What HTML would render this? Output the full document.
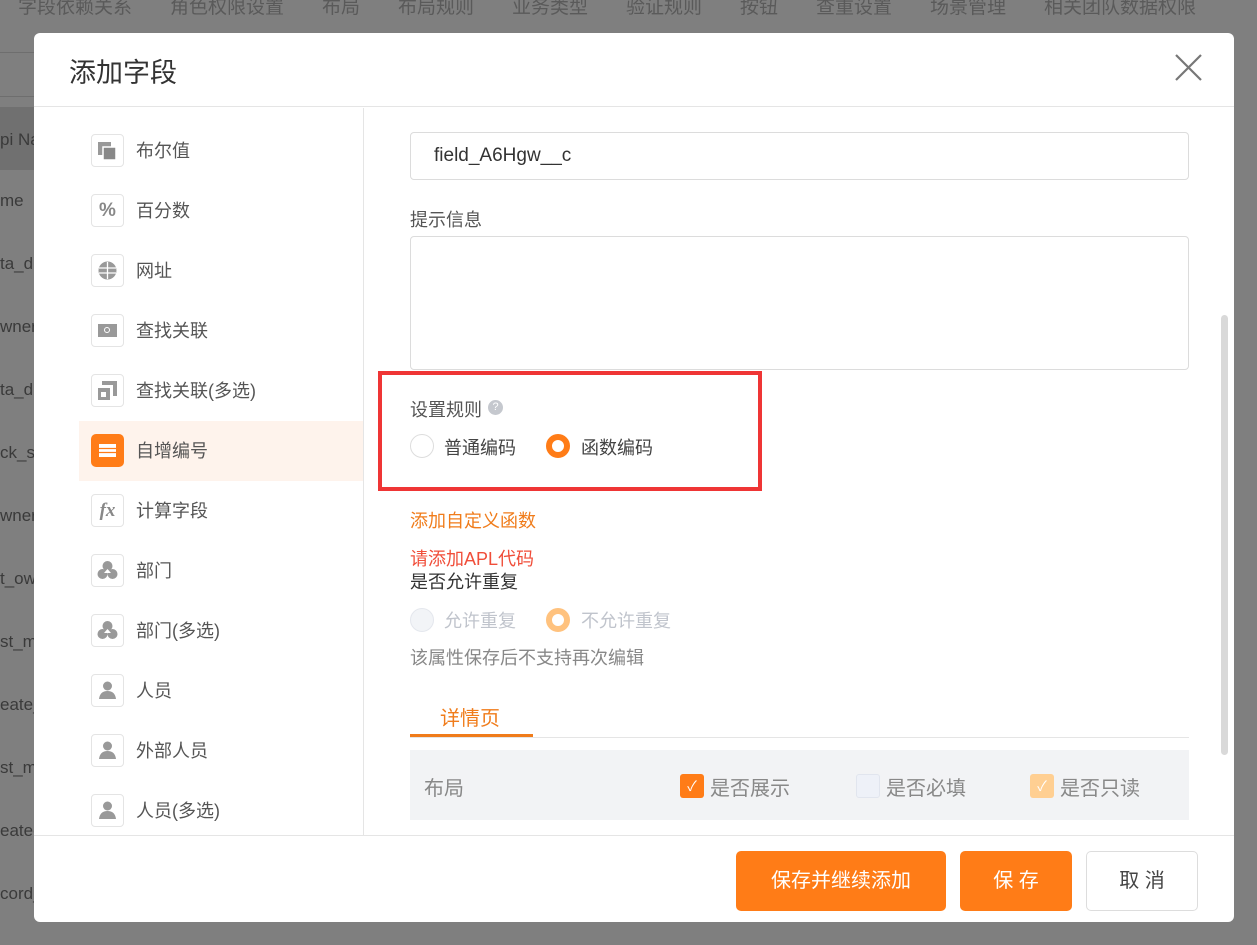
<!DOCTYPE html>
<html><head><meta charset="utf-8"><style>
*{margin:0;padding:0;box-sizing:border-box}
body{width:1257px;height:945px;overflow:hidden;background:#7f7f7f;font-family:"Liberation Sans","Noto Sans CJK SC",sans-serif;position:relative;color:#333}
.bgt{position:absolute;top:-8px;font-size:19px;color:#5a5a5a;white-space:nowrap}
.bgr{position:absolute;left:0;font-size:17px;color:#3a3a3a}
.bgl{position:absolute;left:0;width:40px;height:1px;background:#6e6e6e}
.modal{position:absolute;left:34px;top:33px;width:1200px;height:889px;background:#fff;border-radius:6px;overflow:hidden}
.hd{position:absolute;left:0;top:0;width:100%;height:74px;border-bottom:1px solid #e5e5e5}
.hd h1{position:absolute;left:35px;top:18px;font-size:27px;font-weight:normal;color:#333}
.left{position:absolute;left:0;top:75px;width:330px;height:727px;border-right:1px solid #e5e5e5;overflow:hidden}
.it{position:absolute;left:45px;width:285px;height:60px}
.it.on{background:#fef3ec}
.ic{position:absolute;left:12px;top:13px;width:33px;height:33px;border:1px solid #e4e4e4;border-radius:4px;background:#fff}
.it.on .ic{background:#ff7c17;border-color:#ff7c17;border-radius:5px}
.it span{position:absolute;left:57px;top:16px;font-size:18px;color:#555}
.right{position:absolute;left:376px;top:75px}
.inp{position:absolute;left:0;width:779px;border:1px solid #dcdcdc;border-radius:4px}
.lbl{position:absolute;font-size:18px;white-space:nowrap}
.rad{position:absolute;width:24px;height:24px;border-radius:50%}
.ft{position:absolute;left:0;top:802px;width:100%;height:1px;background:#e5e5e5}
.btn{position:absolute;top:818px;height:60px;border-radius:5px;font-size:20px;text-align:center;line-height:60px}
.cb{position:absolute;width:24px;height:24px;border-radius:3px;top:741px}
</style></head><body>
<div class="bgt" style="left:18px">字段依赖关系　　角色权限设置　　布局　　布局规则　　业务类型　　验证规则　　按钮　　查重设置　　场景管理　　相关团队数据权限</div>
<div class="bgl" style="top:52px"></div><div class="bgl" style="top:96px"></div>
<div style="position:absolute;left:0;top:107px;width:40px;height:63px;background:#707070"></div>
<div class="bgr" style="top:130px">pi Na</div><div class="bgr" style="top:191px">me</div><div class="bgr" style="top:254px">ta_d</div><div class="bgr" style="top:317px">wner</div><div class="bgr" style="top:380px">ta_d</div><div class="bgr" style="top:443px">ck_st</div><div class="bgr" style="top:506px">wner_</div><div class="bgr" style="top:569px">t_ow</div><div class="bgr" style="top:632px">st_m</div><div class="bgr" style="top:695px">eate_</div><div class="bgr" style="top:758px">st_m</div><div class="bgr" style="top:821px">eated</div><div class="bgr" style="top:884px">cord_</div>
<div class="modal">
<div class="hd"><h1>添加字段</h1>
<svg style="position:absolute;left:1141px;top:21px" width="27" height="27" viewBox="0 0 27 27"><path d="M1 1L26 26M26 1L1 26" stroke="#777" stroke-width="2.2"/></svg></div>
<div class="left">
<div class="it" style="top:13px"><div class="ic"><svg width="31" height="31"><rect x="6" y="7" width="13" height="13" fill="#999"/><rect x="11" y="12" width="13" height="13" fill="#888" stroke="#fff" stroke-width="1.5"/></svg></div><span>布尔值</span></div>
<div class="it" style="top:73px"><div class="ic" style="font-weight:bold;color:#888;font-size:19px;text-align:center;line-height:31px">%</div><span>百分数</span></div>
<div class="it" style="top:133px"><div class="ic"><svg width="31" height="31"><circle cx="15.5" cy="15.5" r="9" fill="#999"/><path d="M7 13h17M7 18h17M15.5 7v17" stroke="#fff" stroke-width="1.3"/></svg></div><span>网址</span></div>
<div class="it" style="top:193px"><div class="ic"><svg width="31" height="31"><rect x="6" y="9" width="19" height="13" fill="#999"/><circle cx="15" cy="15" r="2.5" stroke="#fff" fill="none"/></svg></div><span>查找关联</span></div>
<div class="it" style="top:253px"><div class="ic"><svg width="31" height="31"><path d="M10 6h15v15h-4v-11h-11z" fill="#999"/><rect x="6" y="13" width="12" height="12" fill="#999"/><rect x="9" y="17" width="5" height="5" fill="#fff"/></svg></div><span>查找关联(多选)</span></div>
<div class="it on" style="top:313px"><div class="ic"><svg width="31" height="31"><rect x="7" y="9" width="17" height="13" fill="#fff"/><path d="M7 13.5h17M7 17.5h17" stroke="#ff7c17" stroke-width="1.3"/></svg></div><span>自增编号</span></div>
<div class="it" style="top:373px"><div class="ic" style="font-style:italic;font-weight:bold;color:#888;font-size:19px;text-align:center;line-height:31px;font-family:'Liberation Serif',serif">fx</div><span>计算字段</span></div>
<div class="it" style="top:433px"><div class="ic"><svg width="31" height="31"><circle cx="15.5" cy="11" r="5" fill="#999"/><circle cx="10.5" cy="19" r="5" fill="#999"/><circle cx="20.5" cy="19" r="5" fill="#999"/><path d="M12 18l3.5-4 3.5 4z" fill="#fff"/></svg></div><span>部门</span></div>
<div class="it" style="top:493px"><div class="ic"><svg width="31" height="31"><circle cx="15.5" cy="11" r="5" fill="#999"/><circle cx="10.5" cy="19" r="5" fill="#999"/><circle cx="20.5" cy="19" r="5" fill="#999"/><path d="M12 18l3.5-4 3.5 4z" fill="#fff"/></svg></div><span>部门(多选)</span></div>
<div class="it" style="top:553px"><div class="ic"><svg width="31" height="31"><circle cx="15.5" cy="11" r="4.5" fill="#999"/><path d="M7 24q1-8 8.5-8t8.5 8z" fill="#999"/></svg></div><span>人员</span></div>
<div class="it" style="top:613px"><div class="ic"><svg width="31" height="31"><circle cx="15.5" cy="11" r="4.5" fill="#999"/><path d="M7 24q1-8 8.5-8t8.5 8z" fill="#999"/></svg></div><span>外部人员</span></div>
<div class="it" style="top:673px"><div class="ic"><svg width="31" height="31"><circle cx="15.5" cy="11" r="4.5" fill="#999"/><path d="M7 24q1-8 8.5-8t8.5 8z" fill="#999"/></svg></div><span>人员(多选)</span></div>
</div>
<div style="position:absolute;left:1187px;top:282px;width:7px;height:440px;background:#d9d9d9;border-radius:4px"></div>
<div class="right">
<div class="inp" style="top:24px;height:48px"><span style="position:absolute;left:23px;top:12px;font-size:19px;color:#333">field_A6Hgw__c</span></div>
<div class="lbl" style="left:0;top:98px;color:#555">提示信息</div>
<div class="inp" style="top:128px;height:134px"></div>
<div style="position:absolute;left:-32px;top:263px;width:384px;height:120px;border:4px solid #ef3535"></div>
<div class="lbl" style="left:0;top:288px;color:#555">设置规则</div>
<div style="position:absolute;left:78px;top:292px;width:15px;height:15px;border-radius:50%;background:#c5c8ce;color:#fff;font-size:11px;text-align:center;line-height:15px">?</div>
<div class="rad" style="left:0;top:326px;border:1px solid #ddd"></div>
<div class="lbl" style="left:34px;top:326px;color:#444">普通编码</div>
<div class="rad" style="left:136px;top:326px;border:6px solid #ff7c17"></div>
<div class="lbl" style="left:171px;top:326px;color:#444">函数编码</div>
<div class="lbl" style="left:0;top:399px;color:#f07c1b">添加自定义函数</div>
<div class="lbl" style="left:0;top:437px;color:#f04e3a">请添加APL代码</div>
<div class="lbl" style="left:0;top:460px;color:#333">是否允许重复</div>
<div class="rad" style="left:0;top:500px;border:1px solid #e4e7ed;background:#f2f4f7"></div>
<div class="lbl" style="left:34px;top:499px;color:#c0c4cc">允许重复</div>
<div class="rad" style="left:136px;top:500px;border:6px solid #ffc27e"></div>
<div class="lbl" style="left:171px;top:499px;color:#c0c4cc">不允许重复</div>
<div class="lbl" style="left:0;top:536px;color:#888">该属性保存后不支持再次编辑</div>
<div class="lbl" style="left:30px;top:594px;color:#f07c1b;font-size:20px">详情页</div>
<div style="position:absolute;left:0;top:629px;width:779px;height:1px;background:#e5e5e5"></div>
<div style="position:absolute;left:0;top:626px;width:123px;height:3px;background:#f07c1b"></div>
<div style="position:absolute;left:0;top:642px;width:779px;height:70px;background:#f2f3f5"></div>
<div class="lbl" style="left:14px;top:664px;color:#888;font-size:20px">布局</div>
</div>
<div class="cb" style="left:646px;background:#ff7c17;color:#fff;font-size:14px;text-align:center;line-height:24px">✓</div>
<div class="lbl" style="left:676px;top:739px;color:#888;font-size:20px">是否展示</div>
<div class="cb" style="left:822px;border:1px solid #e1e5ee;background:#eef1f8"></div>
<div class="lbl" style="left:852px;top:739px;color:#888;font-size:20px">是否必填</div>
<div class="cb" style="left:996px;background:#ffcf92;color:#fff;font-size:14px;text-align:center;line-height:24px">✓</div>
<div class="lbl" style="left:1026px;top:739px;color:#888;font-size:20px">是否只读</div>
<div class="ft"></div>
<div class="btn" style="left:702px;width:210px;background:#ff7c17;color:#fff">保存并继续添加</div>
<div class="btn" style="left:926px;width:112px;background:#ff7c17;color:#fff">保 存</div>
<div class="btn" style="left:1052px;width:112px;border:1px solid #ddd;color:#444;line-height:58px">取 消</div>
</div>
</body></html>
